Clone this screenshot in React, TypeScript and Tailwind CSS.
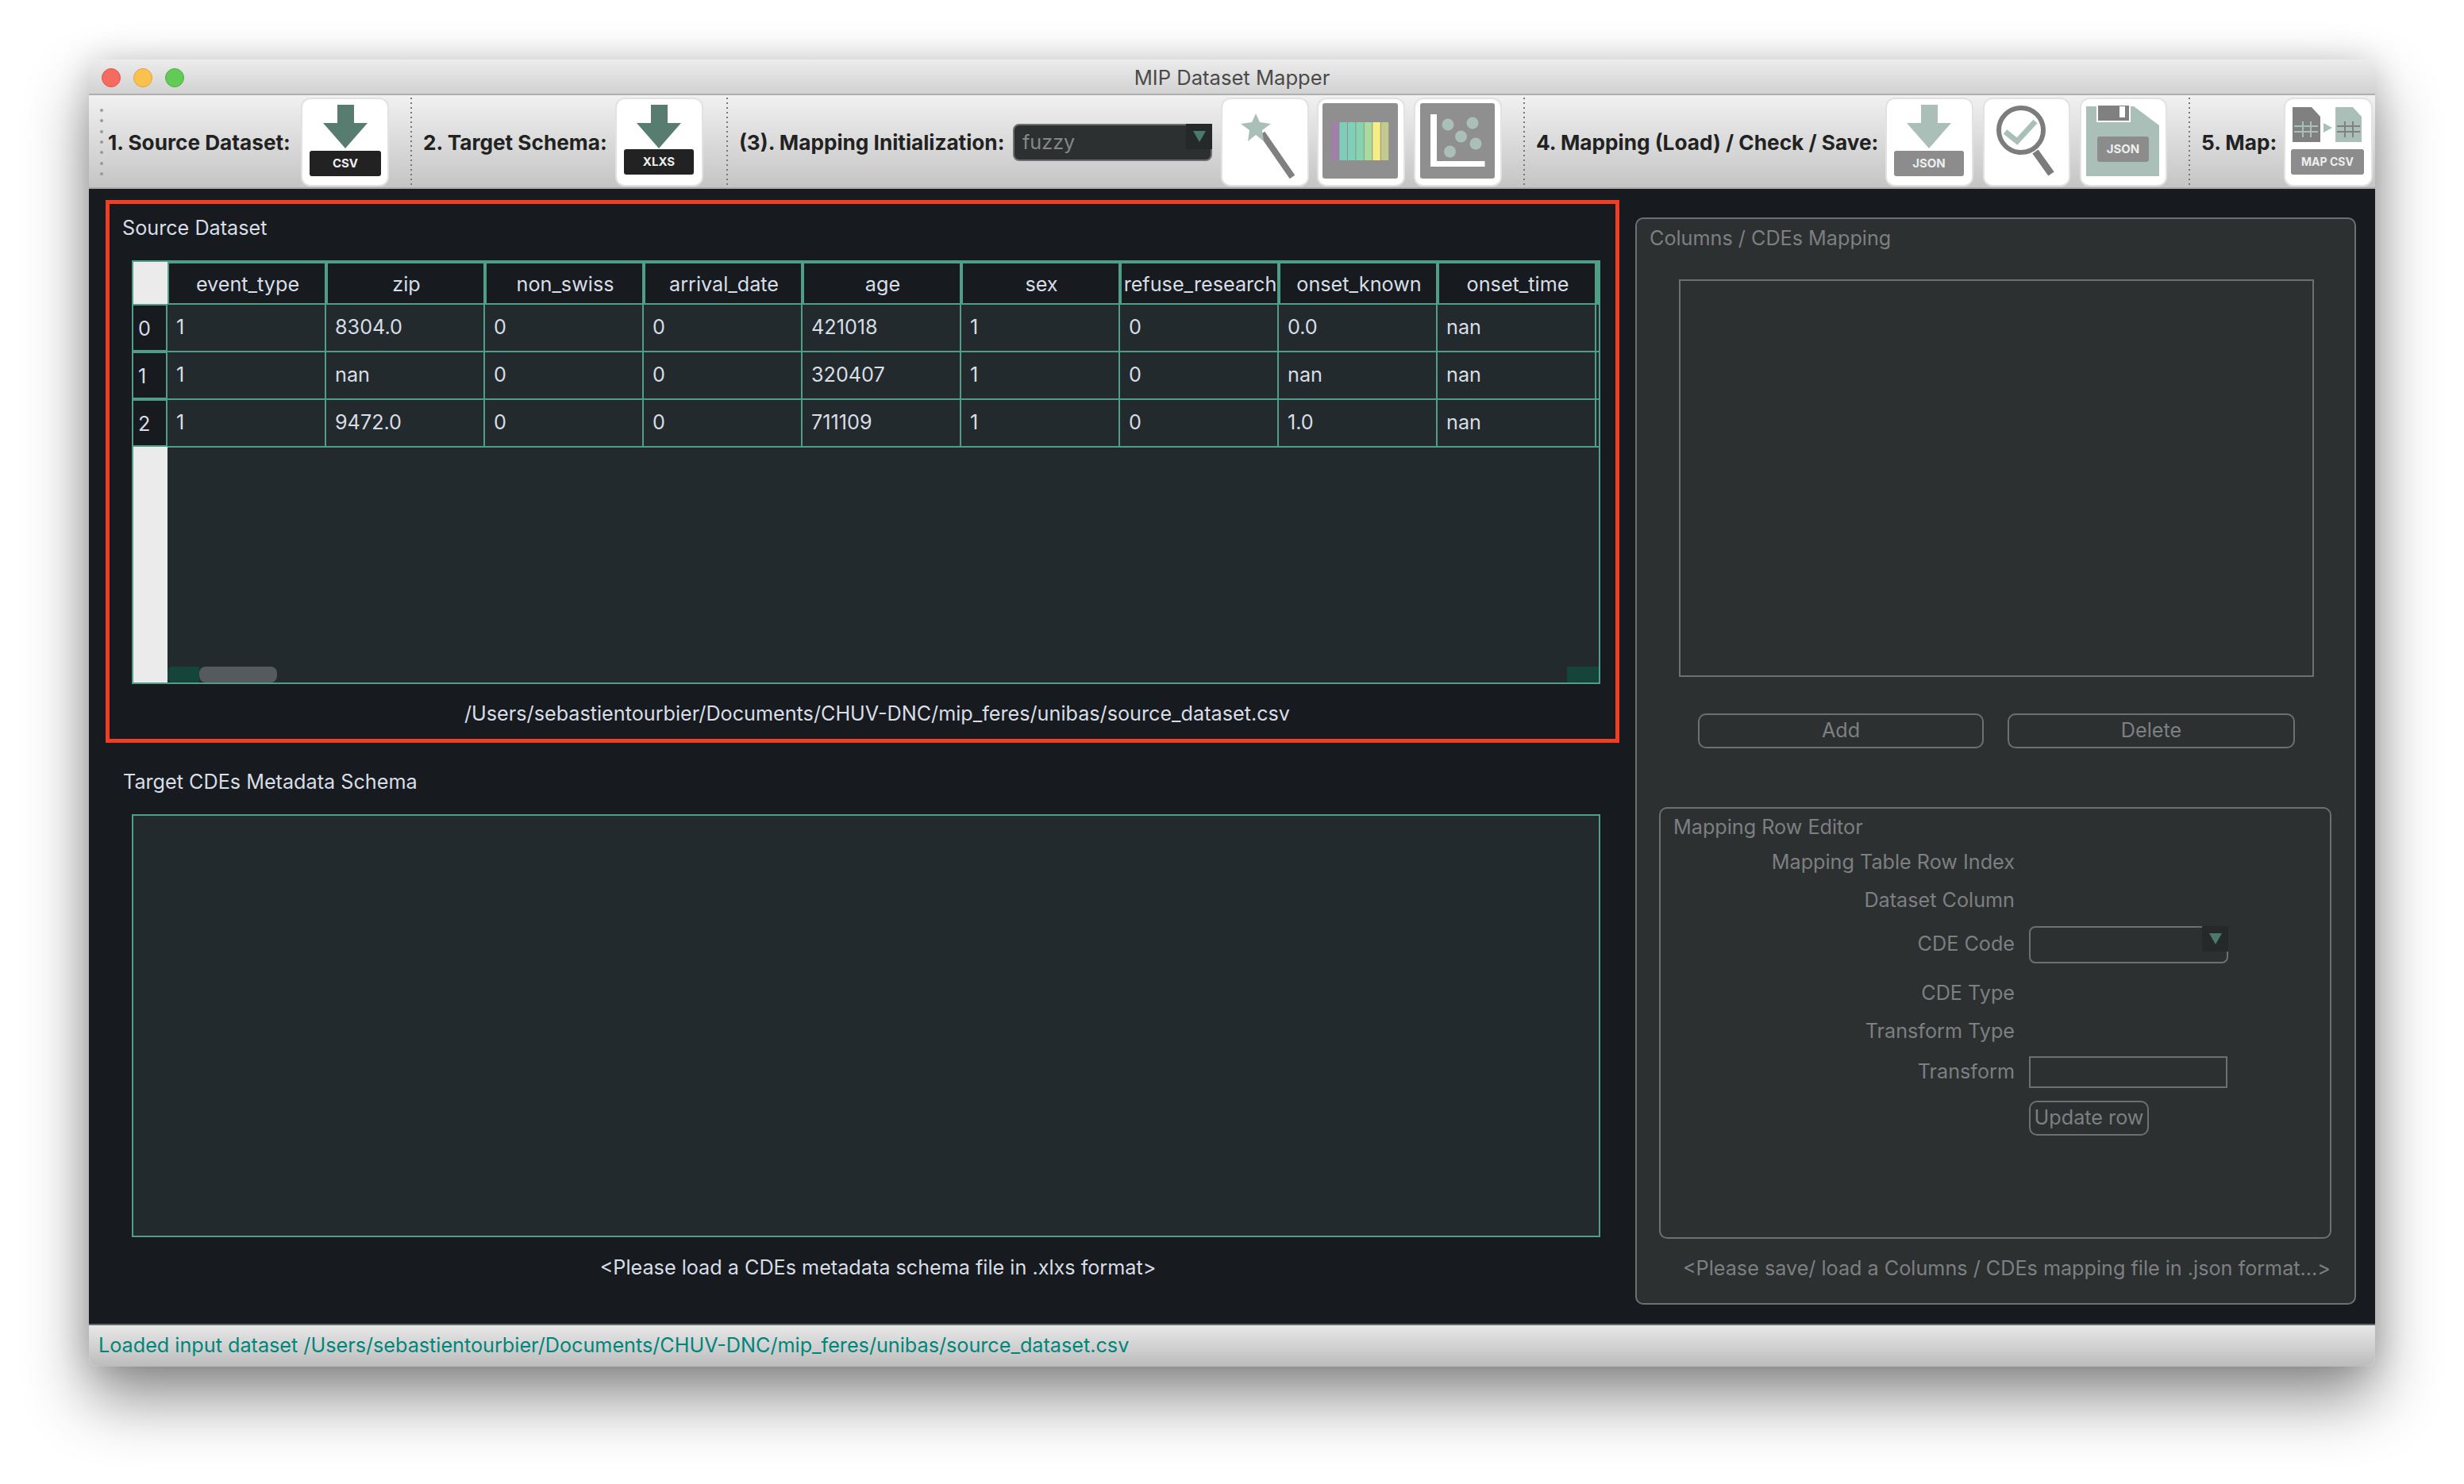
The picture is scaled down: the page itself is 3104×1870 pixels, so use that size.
import type { ReactNode } from 'react'

const columns = ['event_type', 'zip', 'non_swiss', 'arrival_date', 'age', 'sex', 'refuse_research', 'onset_known', 'onset_time']
const rows = [
  ['1', '8304.0', '0', '0', '421018', '1', '0', '0.0', 'nan'],
  ['1', 'nan', '0', '0', '320407', '1', '0', 'nan', 'nan'],
  ['1', '9472.0', '0', '0', '711109', '1', '0', '1.0', 'nan'],
]
const stripes = ['#a17fa8', '#7fcdb8', '#80cfb9', '#86d3b0', '#a9dc9c', '#f6ee84', '#c4c98f']

function ToolLabel({ width, left, children }: { width: number; left: number; children: ReactNode }) {
  return (
    <span className="whitespace-nowrap pt-[2px] text-[26.2px] font-bold text-[#222]" style={{ width, marginLeft: left }}>
      {children}
    </span>
  )
}

function ToolButton({ left, width = 111, children }: { left: number; width?: number; children: ReactNode }) {
  return (
    <div className="h-[112px] shrink-0 rounded-[12px] border-2 border-[#e2e2e2] bg-white" style={{ width, marginLeft: left }}>
      <svg width={width} height={112} viewBox={`0 0 ${width} 112`} className="-m-[2px] block">
        {children}
      </svg>
    </div>
  )
}

function Separator({ left }: { left: number }) {
  return (
    <div
      className="h-[112px] w-[2px] shrink-0 bg-[repeating-linear-gradient(to_bottom,#777_0,#777_2px,transparent_2px,transparent_6px)]"
      style={{ marginLeft: left }}
    />
  )
}

function DownloadIcon({ color, box, tag, boxX, boxW, boxY, cx }: { color: string; box: string; tag: string; boxX: number; boxW: number; boxY: number; cx: number }) {
  return (
    <>
      <rect x={cx - 10} y={9} width={21} height={24} fill={color} />
      <polygon points={`${cx - 28},32 ${cx + 28},32 ${cx},64`} fill={color} />
      <rect x={boxX} y={boxY} width={boxW} height={32} rx={3} fill={box} />
      <text x={boxX + boxW / 2} y={boxY + 21} textAnchor="middle" fontSize={15} fontWeight={700} fill="#eee">{tag}</text>
    </>
  )
}

function Combo({ width, children }: { width: number; children?: ReactNode }) {
  return (
    <div className="relative h-[47px] shrink-0 rounded-[8px] border-2 border-[#6d6f72] bg-[#2d3031]" style={{ width }}>
      <span className="ml-[10px] block text-[25.2px] leading-[42px] text-[#85878a]">{children}</span>
      <div className="absolute -top-[2px] -right-[2px] flex h-[32px] w-[33px] justify-center bg-[#26292a] pt-[9px]">
        <div className="h-0 w-0 border-x-[8px] border-t-[14px] border-x-transparent border-t-[#4b7a6c]" />
      </div>
    </div>
  )
}

function GroupButton({ width, left, children }: { width: number; left?: number; children: ReactNode }) {
  return (
    <div
      className="flex h-[44px] items-center justify-center rounded-[10px] border-2 border-[#6d6f72] text-[25.2px] text-[#7d7f82]"
      style={{ width, marginLeft: left }}
    >
      {children}
    </div>
  )
}

function FormRow({ label, top, height, children }: { label: string; top: number; height: number; children?: ReactNode }) {
  return (
    <div className="flex items-center" style={{ marginTop: top, height }}>
      <span className="w-[446px] text-right text-[25.2px] text-[#7d7f82]">{label}</span>
      <div className="ml-[18px]">{children}</div>
    </div>
  )
}

function SourceTable() {
  return (
    <div className="mt-[26px] ml-[28px] flex h-[534px] w-[1850px] border-2 border-[#4f9f87] bg-[#232a2d]">
      <div className="flex w-[43px] shrink-0 flex-col bg-[#ebebeb]">
        <div className="h-[53px]" />
        {['0', '1', '2'].map((n) => (
          <div key={n} className="flex h-[60px] items-center border-y-2 border-r-2 border-[#4f9f87] bg-[#171b1f] pt-[4px] pl-[6px] text-[25.2px] text-[#d8dde6]">
            {n}
          </div>
        ))}
      </div>
      <div className="flex min-w-0 flex-1 flex-col">
        <div className="flex h-[54px] border-t-[2px] border-b-[2px] border-[#4f9f87] bg-[#171b1f]">
          {columns.map((c) => (
            <div
              key={c}
              className="flex w-[200px] shrink-0 items-center justify-center overflow-hidden border-x-[2px] border-[#4f9f87] pt-[3px] pl-[2px] text-[25.2px] whitespace-nowrap text-[#d8dde6]"
            >
              {c}
            </div>
          ))}
          <div className="flex-1 bg-[#4f9f87]" />
        </div>
        {rows.map((row, i) => (
          <div key={i} className="flex h-[60px] border-b-2 border-[#4f9f87]">
            {row.map((v, j) => (
              <div key={j} className="flex w-[200px] shrink-0 items-center border-r-2 border-[#4f9f87] pl-[11px] text-[25.2px] text-[#d8dde6]">
                {v}
              </div>
            ))}
          </div>
        ))}
        <div className="flex-1" />
        <div className="flex h-[20px] justify-between">
          <div className="relative w-[40px] rounded-l-[6px] bg-[#15443b]">
            <div className="absolute top-0 left-[40px] h-[20px] w-[98px] rounded-[8px] bg-[#555b5d]" />
          </div>
          <div className="w-[40px] bg-[#15443b]" />
        </div>
      </div>
    </div>
  )
}

export default function App() {
  return (
    <div className="h-[1870px] w-[3104px] overflow-hidden bg-white pt-[75px] pl-[112px] font-['Inter',sans-serif]">
      <div className="flex h-[1647px] w-[2880px] flex-col overflow-hidden rounded-[12px] shadow-[0_40px_80px_rgba(0,0,0,0.45),0_0_40px_rgba(0,0,0,0.14)]">
        {/* Title bar */}
        <div className="relative flex h-[45px] shrink-0 items-center justify-center border-b-2 border-[#aeaeae] bg-gradient-to-b from-[#ececec] to-[#d2d2d2] text-[25.6px] text-[#4a4a4a]">
          <div className="absolute top-[11px] left-[16px] flex gap-[16px]">
            <div className="h-[24px] w-[24px] rounded-full border border-[#e0544c] bg-[#f46b62]" />
            <div className="h-[24px] w-[24px] rounded-full border border-[#dfa23a] bg-[#f9c24e]" />
            <div className="h-[24px] w-[24px] rounded-full border border-[#4fae42] bg-[#61cb55]" />
          </div>
          <span className="pt-[3px]">MIP Dataset Mapper</span>
        </div>

        {/* Toolbar */}
        <div className="flex h-[118px] shrink-0 items-center border-b-2 border-[#a9a9a9] bg-gradient-to-b from-[#f1f1f1] to-[#c5c5c5] pt-[2px]">
          <div className="ml-[14px] flex h-[84px] w-[4px] flex-col justify-between">
            {[0, 1, 2, 3, 4, 5, 6].map((i) => (
              <div key={i} className="h-[4px] w-[4px] rounded-full bg-[#999]" />
            ))}
          </div>
          <ToolLabel left={6} width={231}>1. Source Dataset:</ToolLabel>
          <ToolButton left={12}>
            <DownloadIcon color="#587c70" box="#222" tag="CSV" boxX={11} boxW={90} boxY={67} cx={56} />
          </ToolButton>
          <Separator left={27} />
          <ToolLabel left={14} width={230}>2. Target Schema:</ToolLabel>
          <ToolButton left={12}>
            <DownloadIcon color="#587c70" box="#222" tag="XLXS" boxX={11} boxW={88} boxY={65} cx={55} />
          </ToolButton>
          <Separator left={29} />
          <ToolLabel left={14} width={335}>(3). Mapping Initialization:</ToolLabel>
          <div className="ml-[10px]">
            <Combo width={251}>fuzzy</Combo>
          </div>
          <ToolButton left={11}>
            <line x1={52} y1={45} x2={90} y2={100} stroke="#808080" strokeWidth={8} />
            <polygon points="44,20 49,31 63,33 52,41 54,55 44,47 34,55 36,41 25,33 39,31" fill="#abbfb9" />
          </ToolButton>
          <ToolButton left={10}>
            <rect x={7} y={7} width={95} height={95} rx={3} fill="#8f8f8f" />
            {stripes.map((c, i) => (
              <rect key={c} x={18 + i * 10.45} y={31} width={9.500} height={48} fill={c} />
            ))}
          </ToolButton>
          <ToolButton left={11}>
            <rect x={8} y={7} width={94} height={95} rx={3} fill="#8f8f8f" />
            <path d="M21 21h8v59h60.500v7H21z" fill="#fff" />
            {[[43, 34], [74, 32], [59.5, 49], [78, 58], [45.5, 68]].map(([cx, cy]) => (
              <circle key={cx} cx={cx} cy={cy} r={7.500} fill="#abbfb9" />
            ))}
          </ToolButton>
          <Separator left={27} />
          <ToolLabel left={14} width={429}>4. Mapping (Load) / Check / Save:</ToolLabel>
          <ToolButton left={11}>
            <DownloadIcon color="#abbfb9" box="#8c8c8c" tag="JSON" boxX={11} boxW={88} boxY={67} cx={55} />
          </ToolButton>
          <ToolButton left={12} width={110}>
            <ellipse cx={48} cy={41} rx={28} ry={28} fill="none" stroke="#7c7c7c" strokeWidth={6} />
            <line x1={66} y1={68} x2={86} y2={96} stroke="#7c7c7c" strokeWidth={9} />
            <polyline points="28,43 43,55 66,30" fill="none" stroke="#abbfb9" strokeWidth={7} />
          </ToolButton>
          <ToolButton left={12} width={110}>
            <path d="M8 11h60l32 24v64H8z" fill="#abbfb9" />
            <rect x={22} y={9} width={41} height={21} fill="#808080" stroke="#fff" strokeWidth={2} />
            <rect x={50} y={11} width={7} height={14} fill="#fff" />
            <rect x={22} y={49} width={65} height={32} rx={3} fill="#8c8c8c" />
            <text x={54.500} y={70} textAnchor="middle" fontSize={15} fontWeight={700} fill="#eee">JSON</text>
          </ToolButton>
          <Separator left={27} />
          <ToolLabel left={14} width={93}>5. Map:</ToolLabel>
          <ToolButton left={11} width={112}>
            <path d="M11 12h24l11 12v32H11z" fill="#808080" />
            <path d="M13 36h30M13 43h30M24 30v20M34 30v20" stroke="#abbfb9" strokeWidth={2} />
            <polygon points="50,32 61,38 50,44" fill="#abbfb9" />
            <path d="M65 12h22l11 12v32H65z" fill="#abbfb9" />
            <path d="M67 36h29M67 43h29M77 30v20M87 30v20" stroke="#808080" strokeWidth={2} />
            <rect x={9} y={65} width={92} height={32} rx={3} fill="#8c8c8c" />
            <text x={55} y={86} textAnchor="middle" fontSize={14} fontWeight={700} fill="#eee">MAP CSV</text>
          </ToolButton>
        </div>

        {/* Central area */}
        <div className="flex min-h-0 flex-1 bg-[#171b1f]">
          <div className="w-[1948px] shrink-0 pt-[14px] pl-[21px]">
            <section className="h-[684px] w-[1907px] border-[5px] border-[#ef3e23] pt-[15px]">
              <h2 className="ml-[16px] text-[25.2px] leading-[30px] text-[#d8dde6]">Source Dataset</h2>
              <SourceTable />
              <p className="mt-[22px] ml-[42px] w-[1850px] text-center text-[25.2px] leading-[30px] text-[#d8dde6]">
                /Users/sebastientourbier/Documents/CHUV-DNC/mip_feres/unibas/source_dataset.csv
              </p>
            </section>
            <section className="pt-[34px]">
              <h2 className="ml-[22px] text-[25.2px] leading-[30px] text-[#d8dde6]">Target CDEs Metadata Schema</h2>
              <div className="mt-[26px] ml-[33px] h-[533px] w-[1850px] border-2 border-[#4f9f87] bg-[#232a2d]" />
              <p className="mt-[23px] ml-[48px] w-[1850px] text-center text-[25.2px] leading-[30px] text-[#d8dde6]">
                &lt;Please load a CDEs metadata schema file in .xlxs format&gt;
              </p>
            </section>
          </div>

          <aside className="mt-[36px] h-[1370px] w-[908px] shrink-0 rounded-[10px] border-2 border-[#6d6f72] bg-[#2d3031] pt-[9px] text-[#7d7f82]">
            <h2 className="ml-[16px] text-[25.2px] leading-[30px]">Columns / CDEs Mapping</h2>
            <div className="mt-[37px] ml-[53px] h-[501px] w-[800px] border-2 border-[#6d6f72]" />
            <div className="mt-[46px] ml-[77px] flex">
              <GroupButton width={360}>Add</GroupButton>
              <GroupButton width={362} left={30}>Delete</GroupButton>
            </div>
            <div className="mt-[74px] ml-[28px] h-[544px] w-[847px] rounded-[10px] border-2 border-[#6d6f72] pt-[8px]">
              <h3 className="ml-[16px] text-[25.2px] leading-[30px]">Mapping Row Editor</h3>
              <FormRow label="Mapping Table Row Index" top={10} height={40} />
              <FormRow label="Dataset Column" top={8} height={40} />
              <FormRow label="CDE Code" top={11} height={48}>
                <Combo width={251} />
              </FormRow>
              <FormRow label="CDE Type" top={18} height={40} />
              <FormRow label="Transform Type" top={8} height={40} />
              <FormRow label="Transform" top={11} height={40}>
                <div className="h-[40px] w-[250px] border-2 border-[#6d6f72]" />
              </FormRow>
              <div className="mt-[16px] ml-[464px]">
                <GroupButton width={151}>Update row</GroupButton>
              </div>
            </div>
            <p className="mt-[22px] mr-[30px] text-right text-[25.2px] leading-[30px]">
              &lt;Please save/ load a Columns / CDEs mapping file in .json format...&gt;
            </p>
          </aside>
        </div>

        {/* Status bar */}
        <div className="flex h-[54px] shrink-0 items-center border-t-2 border-[#666] bg-gradient-to-b from-[#e8e8e8] to-[#bcbcbc] pl-[12px] text-[25.2px] text-[#00857a]">
          Loaded input dataset /Users/sebastientourbier/Documents/CHUV-DNC/mip_feres/unibas/source_dataset.csv
        </div>
      </div>
    </div>
  )
}
